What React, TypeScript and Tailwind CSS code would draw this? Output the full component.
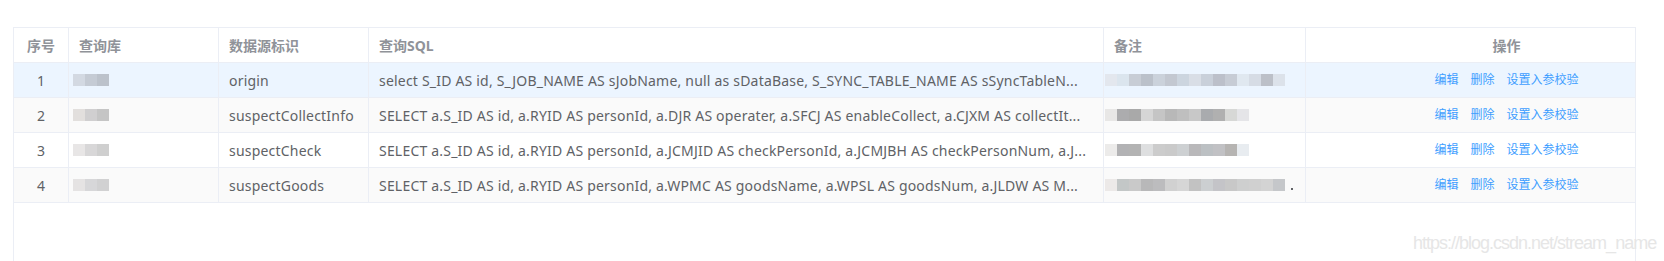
const rows = [
  {
    no: 1,
    db: ['#d3d9e2', '#c5cbd4', '#bcc2cb'],
    name: 'origin',
    sql: 'select S_ID AS id, S_JOB_NAME AS sJobName, null as sDataBase, S_SYNC_TABLE_NAME AS sSyncTableN...',
    note: ['#e3e7ee', '#dbe5ee', '#c8cdd5', '#bbc1ca', '#cbd2db', '#c3c8d1', '#ccd5df', '#d9dee6', '#c9d0da', '#bcc0ca', '#c7ccd5', '#e0e8f0', '#d6dce5', '#bcc0c8', '#dce2ea'],
    bg: 'bg-[#ecf5ff]',
  },
  {
    no: 2,
    db: ['#e2dfdd', '#d0cfd0', '#c5c5c5'],
    name: 'suspectCollectInfo',
    sql: 'SELECT a.S_ID AS id, a.RYID AS personId, a.DJR AS operater, a.SFCJ AS enableCollect, a.CJXM AS collectIt...',
    note: ['#e8e7e6', '#acacae', '#a9a9a9', '#d6d6d6', '#c5c5c5', '#b8b8b8', '#bfbfbf', '#c8c8c8', '#a9abae', '#b0b0b0', '#d7d8d6', '#e5e5e8'],
    bg: 'bg-[#fafafa]',
  },
  {
    no: 3,
    db: ['#e8e6e6', '#d8d7d8', '#cfcfcf'],
    name: 'suspectCheck',
    sql: 'SELECT a.S_ID AS id, a.RYID AS personId, a.JCMJID AS checkPersonId, a.JCMJBH AS checkPersonNum, a.J...',
    note: ['#ecebea', '#b2b2b4', '#b3b3b3', '#dedfe0', '#cccccc', '#cacaca', '#cdd0d2', '#b9b8ba', '#bcc0c3', '#c1c1c4', '#b6b4b2', '#e8ecf0'],
    bg: 'bg-white',
  },
  {
    no: 4,
    db: ['#e5e3e3', '#d7d7d9', '#d1d1d2'],
    name: 'suspectGoods',
    sql: 'SELECT a.S_ID AS id, a.RYID AS personId, a.WPMC AS goodsName, a.WPSL AS goodsNum, a.JLDW AS M...',
    note: ['#ece9e8', '#c3c7c7', '#c9c9c9', '#b8b8b9', '#bcbcbe', '#d1d1d1', '#d6d6d6', '#c2c2c2', '#cccfd1', '#c4c4c8', '#c8c8c8', '#cecfcf', '#d0d0d0', '#d3d3d3', '#c5c7ca'],
    bg: 'bg-[#fafafa]',
  },
];

function Mosaic({ colors }: { colors: string[] }) {
  return (
    <div className="flex">
      {colors.map((c, i) => (
        <div key={i} className="w-[12px] h-[12px]" style={{ backgroundColor: c }} />
      ))}
    </div>
  );
}

const grid = 'grid grid-cols-[55px_150px_150px_735px_202px_329px]';
const cell = 'h-[34px] flex items-center border-r border-[#ebeef5] overflow-hidden whitespace-nowrap';

export default function App() {
  return (
    <div
      className="relative w-[1664px] h-[261px] overflow-hidden bg-white"
      style={{ fontFamily: '"Noto Sans", "Noto Sans CJK SC", sans-serif' }}
    >
      <div className="ml-[13px] mt-[27px] w-[1623px] h-[250px] border-t border-x border-[#ebeef5]">
        <div className={`${grid} border-b border-[#ebeef5] text-[14px] font-bold text-[#909399]`}>
          <div className={`${cell} justify-center`}>序号</div>
          <div className={`${cell} px-[10px]`}>查询库</div>
          <div className={`${cell} px-[10px]`}>数据源标识</div>
          <div className={`${cell} px-[10px]`}>查询SQL</div>
          <div className={`${cell} px-[10px]`}>备注</div>
          <div className="h-[34px] flex items-center justify-center pl-[72px]">操作</div>
        </div>
        {rows.map((r) => (
          <div key={r.no} className={`${grid} ${r.bg} border-b border-[#ebeef5] text-[14px] text-[#606266]`}>
            <div className={`${cell} justify-center`}>{r.no}</div>
            <div className={`${cell} pl-[4px]`}>
              <Mosaic colors={r.db} />
            </div>
            <div className={`${cell} px-[10px] tracking-[0.2px]`}>{r.name}</div>
            <div className={`${cell} px-[10px] tracking-[0.2px]`}>{r.sql}</div>
            <div className={`${cell} pl-[1px]`}>
              <Mosaic colors={r.note} />
              {r.no === 4 && <span className="ml-[6px] mt-[8px] w-[2px] h-[2px] bg-[#606266]" />}
            </div>
            <div className="h-[34px] flex items-center justify-center pl-[72px] gap-[12px] text-[12px] text-[#409eff]">
              <span>编辑</span>
              <span>删除</span>
              <span>设置入参校验</span>
            </div>
          </div>
        ))}
      </div>
      <div
        className="absolute left-[1413px] top-[230px] text-[18px] tracking-[-1px] text-[#e6e6e6] whitespace-nowrap"
        style={{ fontFamily: '"Liberation Sans", Arial, sans-serif' }}
      >
        https://blog.csdn.net/stream_name
      </div>
    </div>
  );
}
